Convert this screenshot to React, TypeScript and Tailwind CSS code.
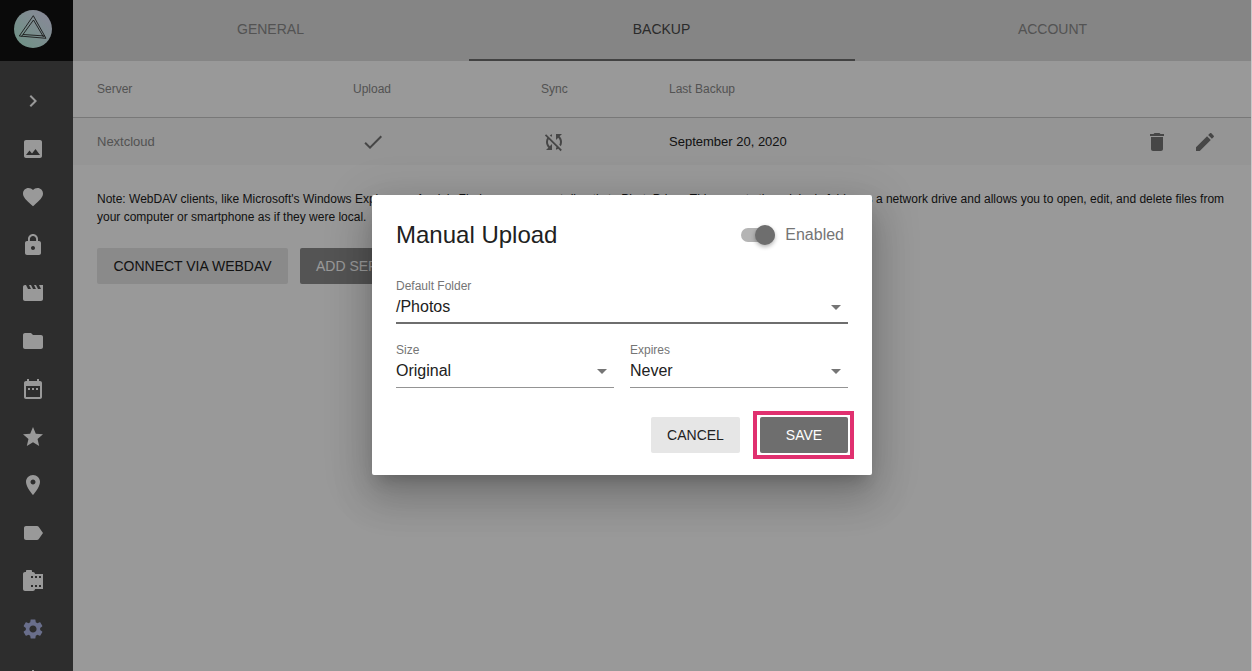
const font = "font-['Liberation_Sans',Arial,sans-serif]";

const icons = {
  chevron: "M10 6L8.59 7.41 13.17 12l-4.58 4.59L10 18l6-6z",
  photo:
    "M21 19V5c0-1.1-.9-2-2-2H5c-1.1 0-2 .9-2 2v14c0 1.1.9 2 2 2h14c1.1 0 2-.9 2-2zM8.5 13.5l2.5 3.01L14.5 12l4.5 6H5l3.5-4.5z",
  heart:
    "M12 21.35l-1.45-1.32C5.4 15.36 2 12.28 2 8.5 2 5.42 4.42 3 7.5 3c1.74 0 3.41.81 4.5 2.09C13.09 3.81 14.76 3 16.5 3 19.58 3 22 5.42 22 8.5c0 3.78-3.4 6.86-8.55 11.54L12 21.35z",
  lock: "M18 8h-1V6c0-2.76-2.24-5-5-5S7 3.24 7 6v2H6c-1.1 0-2 .9-2 2v10c0 1.1.9 2 2 2h12c1.1 0 2-.9 2-2V10c0-1.1-.9-2-2-2zm-6 9c-1.1 0-2-.9-2-2s.9-2 2-2 2 .9 2 2-.9 2-2 2zm3.1-9H8.9V6c0-1.71 1.39-3.1 3.1-3.1 1.71 0 3.1 1.39 3.1 3.1v2z",
  movie:
    "M18 4l2 4h-3l-2-4h-2l2 4h-3l-2-4H8l2 4H7L5 4H4c-1.1 0-1.99.9-1.99 2L2 18c0 1.1.9 2 2 2h16c1.1 0 2-.9 2-2V4h-4z",
  folder:
    "M10 4H4c-1.1 0-1.99.9-1.99 2L2 18c0 1.1.9 2 2 2h16c1.1 0 2-.9 2-2V8c0-1.1-.9-2-2-2h-8l-2-2z",
  calendar:
    "M9 11H7v2h2v-2zm4 0h-2v2h2v-2zm4 0h-2v2h2v-2zm2-7h-1V2h-2v2H8V2H6v2H5c-1.11 0-1.99.9-1.99 2L3 20c0 1.1.89 2 2 2h14c1.1 0 2-.9 2-2V6c0-1.1-.9-2-2-2zm0 16H5V9h14v11z",
  star: "M12 17.27L18.18 21l-1.64-7.03L22 9.24l-7.19-.61L12 2 9.19 8.63 2 9.24l5.46 4.73L5.82 21z",
  place:
    "M12 2C8.13 2 5 5.13 5 9c0 5.25 7 13 7 13s7-7.75 7-13c0-3.87-3.13-7-7-7zm0 9.5c-1.38 0-2.5-1.12-2.5-2.5s1.12-2.5 2.5-2.5 2.5 1.12 2.5 2.5-1.12 2.5-2.5 2.5z",
  label:
    "M17.63 5.84C17.27 5.33 16.67 5 16 5L5 5.01C3.9 5.01 3 5.9 3 7v10c0 1.1.9 1.99 2 1.99L16 19c.67 0 1.27-.33 1.63-.84L22 12l-4.37-6.16z",
  roll: "M14 5c0-1.1-.9-2-2-2h-1V2c0-.55-.45-1-1-1H6c-.55 0-1 .45-1 1v1H4c-1.1 0-2 .9-2 2v15c0 1.1.9 2 2 2h8c1.1 0 2-.9 2-2h8V5h-8zm-2 13h-2v-2h2v2zm0-9h-2V7h2v2zm4 9h-2v-2h2v2zm0-9h-2V7h2v2zm4 9h-2v-2h2v2zm0-9h-2V7h2v2z",
  settings:
    "M19.14 12.94c.04-.3.06-.61.06-.94 0-.32-.02-.64-.07-.94l2.03-1.58c.18-.14.23-.41.12-.61l-1.92-3.32c-.12-.22-.37-.29-.59-.22l-2.39.96c-.5-.38-1.03-.7-1.62-.94l-.36-2.54c-.04-.24-.24-.41-.48-.41h-3.84c-.24 0-.43.17-.47.41l-.36 2.54c-.59.24-1.13.57-1.62.94l-2.39-.96c-.22-.08-.47 0-.59.22L2.74 8.87c-.12.21-.08.47.12.61l2.03 1.58c-.05.3-.09.63-.09.94s.02.64.07.94l-2.03 1.58c-.18.14-.23.41-.12.61l1.92 3.32c.12.22.37.29.59.22l2.39-.96c.5.38 1.03.7 1.62.94l.36 2.54c.05.24.24.41.48.41h3.84c.24 0 .44-.17.47-.41l.36-2.54c.59-.24 1.13-.56 1.62-.94l2.39.96c.22.08.47 0 .59-.22l1.92-3.32c.12-.22.07-.47-.12-.61l-2.01-1.58zM12 15.6c-1.98 0-3.6-1.62-3.6-3.6s1.62-3.6 3.6-3.6 3.6 1.62 3.6 3.6-1.62 3.6-3.6 3.6z",
  add: "M19 13h-6v6h-2v-6H5v-2h6V5h2v6h6v2z",
  check: "M9 16.2L4.8 12l-1.4 1.4L9 19 21 7l-1.4-1.4z",
  syncOff:
    "M10 6.35V4.26c-.8.21-1.55.54-2.23.96l1.46 1.46c.25-.12.5-.24.77-.33zm-7.14-.94l2.36 2.36C4.45 8.99 4 10.44 4 12c0 2.21.91 4.2 2.36 5.64L4 20h6v-6l-2.24 2.24C6.68 15.15 6 13.66 6 12c0-1 .25-1.94.68-2.77l8.08 8.08c-.25.13-.5.25-.77.34v2.09c.8-.21 1.55-.54 2.23-.96l2.36 2.36 1.27-1.27L4.14 4.14 2.86 5.41zM20 4h-6v6l2.24-2.24C17.32 8.85 18 10.34 18 12c0 1-.25 1.94-.68 2.77l1.46 1.46C19.55 15.01 20 13.56 20 12c0-2.21-.91-4.2-2.36-5.64L20 4z",
  trash: "M6 19c0 1.1.9 2 2 2h8c1.1 0 2-.9 2-2V7H6v12zM19 4h-3.5l-1-1h-5l-1 1H5v2h14V4z",
  edit: "M3 17.25V21h3.75L17.81 9.94l-3.75-3.75L3 17.25zM20.71 7.04c.39-.39.39-1.02 0-1.41l-2.34-2.34c-.39-.39-1.02-.39-1.41 0l-1.83 1.83 3.75 3.75 1.83-1.83z",
};

const navItems = [
  { d: icons.chevron, cls: "fill-white" },
  { d: icons.photo, cls: "fill-white" },
  { d: icons.heart, cls: "fill-white" },
  { d: icons.lock, cls: "fill-white" },
  { d: icons.movie, cls: "fill-white" },
  { d: icons.folder, cls: "fill-white" },
  { d: icons.calendar, cls: "fill-white" },
  { d: icons.star, cls: "fill-white" },
  { d: icons.place, cls: "fill-white" },
  { d: icons.label, cls: "fill-white" },
  { d: icons.roll, cls: "fill-white" },
  { d: icons.settings, cls: "fill-[#b0b8e8]" },
  { d: icons.add, cls: "fill-white" },
];

function Icon({ d, className }: { d: string; className?: string }) {
  return (
    <svg viewBox="0 0 24 24" className={className}>
      <path d={d} />
    </svg>
  );
}

function Logo() {
  return (
    <div className="h-[38px] w-[38px] rounded-full bg-linear-to-tr from-[#b4f5dc] to-[#e6e2ff]">
      <svg viewBox="0 0 38 38" className="h-[38px] w-[38px] fill-none stroke-[#2a2a2a] stroke-[0.9]">
        <path d="M19.3 5.7L5.3 26 32 28.3z" />
        <path d="M19.5 10L7.5 26.5" />
        <path d="M19.5 10L29.5 27" />
        <path d="M9 24.5L31 26" />
      </svg>
    </div>
  );
}

function Select({ label, value, strong }: { label: string; value: string; strong?: boolean }) {
  return (
    <div className="min-w-0 flex-1">
      <div className="h-[14px] text-[12px] leading-[14px] text-[#757575]">{label}</div>
      <div
        className={`mt-[5px] flex h-[26px] items-start justify-between border-b text-[16px] leading-[18px] text-[#212121] ${
          strong ? "border-b-2 border-[#6e6e6e]" : "border-[#949494]"
        }`}
      >
        <span>{value}</span>
        <span className="mt-[7px] mr-[7px] h-0 w-0 border-x-[5px] border-t-[5px] border-x-transparent border-t-[#757575]" />
      </div>
    </div>
  );
}

export default function App() {
  return (
    <div className={`relative flex h-[671px] w-[1252px] overflow-hidden bg-[#c8c8c8] ${font}`}>
      <aside className="h-full w-[73px] shrink-0 overflow-hidden bg-[#4b4b4b]">
        <div className="flex h-[61px] justify-center bg-[#111111] pt-[10px] pr-[8px]">
          <Logo />
        </div>
        <nav className="flex flex-col items-center pt-[16px] pr-[8px]">
          {navItems.map((item, i) => (
            <div key={i} className="flex h-[48px] w-full items-center justify-center">
              <Icon d={item.d} className={`h-6 w-6 ${item.cls}`} />
            </div>
          ))}
        </nav>
      </aside>

      <main className="mr-px min-w-0 flex-1 bg-white">
        <div className="flex h-[61px] bg-[#dedede] pr-[3px] pl-[2px]">
          {["GENERAL", "BACKUP", "ACCOUNT"].map((tab) => (
            <div
              key={tab}
              className={`mx-[2.5px] flex flex-1 items-center justify-center border-b-2 text-[14px] ${
                tab === "BACKUP" ? "border-[#6e6e6e] text-[#484848]" : "border-transparent text-[#8a8a8a]"
              }`}
            >
              {tab}
            </div>
          ))}
        </div>

        <div className="flex h-[57px] items-center border-b border-[#c8c8c8] pb-[1px] pl-[24px] text-[12px] text-[#8a8a8a]">
          <div className="w-[256px]">Server</div>
          <div className="w-[188px]">Upload</div>
          <div className="w-[128px]">Sync</div>
          <div>Last Backup</div>
        </div>

        <div className="flex h-[47px] items-center bg-[#f8f8f8] pr-[34px] pl-[24px] text-[13px]">
          <div className="w-[256px] text-[#8a8a8a]">Nextcloud</div>
          <div className="w-[188px]">
            <Icon d={icons.check} className="ml-[8px] h-6 w-6 fill-[#757575]" />
          </div>
          <div className="w-[128px]">
            <Icon d={icons.syncOff} className="ml-[1px] h-6 w-6 fill-[#757575]" />
          </div>
          <div className="flex-1 text-[#212121]">September 20, 2020</div>
          <div className="flex gap-[24px]">
            <Icon d={icons.trash} className="h-6 w-6 fill-[#757575]" />
            <Icon d={icons.edit} className="h-6 w-6 fill-[#757575]" />
          </div>
        </div>

        <div className="px-[24px] pt-[25px]">
          <p className="text-[12px] leading-[18px] text-[#212121]">
            Note: WebDAV clients, like Microsoft's Windows Explorer or Apple's Finder, can connect directly to
            PhotoPrism. This mounts the originals folder as a network drive and allows you to open, edit, and delete
            files from
            <br />
            your computer or smartphone as if they were local.
          </p>
          <div className="mt-[22px] flex gap-[12px] text-[14px]">
            <div className="flex h-[36px] w-[191px] items-center justify-center rounded-[2px] bg-[#e6e6e6] text-[#212121]">
              CONNECT VIA WEBDAV
            </div>
            <div className="flex h-[36px] items-center rounded-[2px] bg-[#8c8c8c] px-[16px] text-white">ADD SERVER</div>
          </div>
        </div>
      </main>

      <div className="absolute inset-y-0 right-px left-0 flex items-center justify-center bg-black/40 pr-[7px] pb-[1px]">
        <div className="h-[280px] w-[500px] rounded-[2px] bg-white px-[24px] shadow-[0_11px_15px_-7px_rgba(0,0,0,0.2),0_24px_38px_3px_rgba(0,0,0,0.14),0_9px_46px_8px_rgba(0,0,0,0.12)]">
          <div className="mb-[4px] flex h-[80px] items-center justify-between pr-[4px]">
            <h2 className="text-[24px] leading-[32px] text-[#212121]">Manual Upload</h2>
            <div className="flex items-center gap-[10px]">
              <div className="relative h-[14px] w-[34px] rounded-full bg-[#b4b4b4]">
                <div className="absolute top-[-3px] right-0 h-[20px] w-[20px] rounded-full bg-[#6e6e6e] shadow-[0_2px_4px_rgba(0,0,0,0.3)]" />
              </div>
              <span className="text-[16px] text-[#757575]">Enabled</span>
            </div>
          </div>

          <Select label="Default Folder" value="/Photos" strong />

          <div className="mt-[19px] flex gap-[16px]">
            <Select label="Size" value="Original" />
            <Select label="Expires" value="Never" />
          </div>

          <div className="mt-[23px] flex items-center justify-end gap-[13px]">
            <div className="flex h-[36px] w-[89px] items-center justify-center rounded-[2px] bg-[#e6e6e6] text-[14px] text-[#212121]">
              CANCEL
            </div>
            <div className="mr-[-6px] border-4 border-[#e0306f] py-[2px] pr-[2px] pl-[3px]">
              <div className="flex h-[36px] w-[88px] items-center justify-center rounded-[2px] bg-[#6e6e6e] text-[14px] text-white">
                SAVE
              </div>
            </div>
          </div>
        </div>
      </div>
    </div>
  );
}
